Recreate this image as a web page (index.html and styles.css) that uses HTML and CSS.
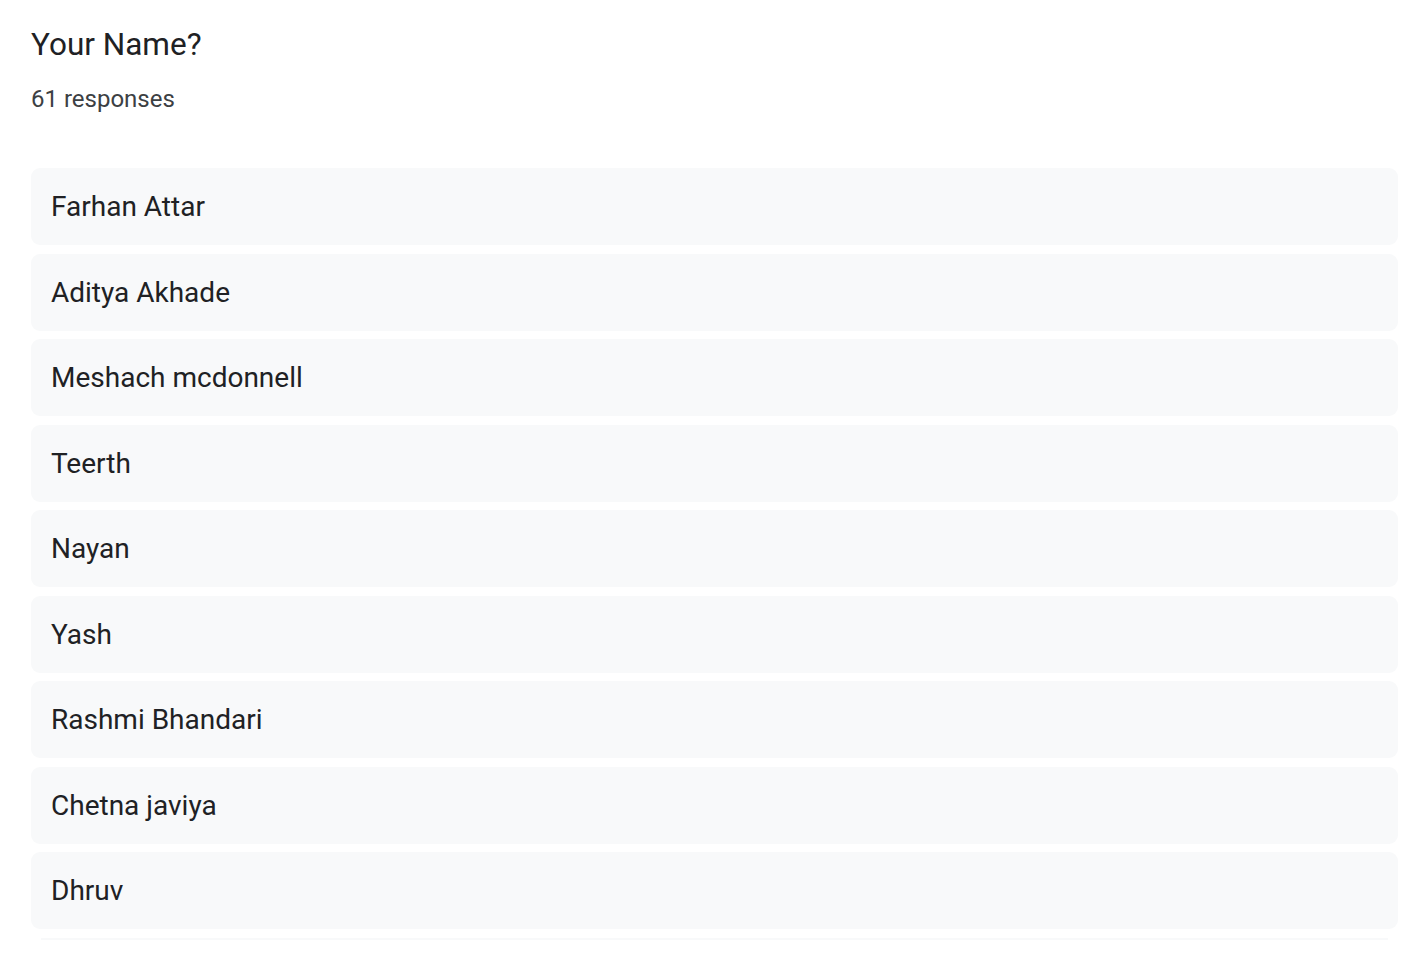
FILE: index.html
```html
<!DOCTYPE html>
<html lang="en">
<head>
  <meta charset="UTF-8">
  <title>Your Name? - Responses</title>
  <link rel="stylesheet" href="styles.css">
</head>
<body>
  <section class="question">
    <header class="question-header">
      <h2>Your Name?</h2>
      <p class="count">61 responses</p>
    </header>

    <div class="answers">
      <div class="answer">Farhan Attar</div>
      <div class="answer">Aditya Akhade</div>
      <div class="answer">Meshach mcdonnell</div>
      <div class="answer">Teerth</div>
      <div class="answer">Nayan</div>
      <div class="answer">Yash</div>
      <div class="answer">Rashmi Bhandari</div>
      <div class="answer">Chetna javiya</div>
      <div class="answer">Dhruv</div>
      <div class="answer answer-cut"></div>
    </div>
  </section>
</body>
</html>
```

FILE: styles.css
```css
* {
  box-sizing: border-box;
  margin: 0;
  padding: 0;
}

body {
  font-family: Roboto, "Liberation Sans", sans-serif;
  background: #fff;
  color: #202124;
  height: 980px;
  overflow: hidden;
}

.question {
  padding: 27px 6px 0 31px;
}

.question-header h2 {
  font-size: 31.5px;
  font-weight: 400;
  line-height: 36px;
}

.count {
  font-size: 24px;
  line-height: 28px;
  margin-top: 22px;
  color: #3c4043;
}

.answers {
  display: flex;
  flex-direction: column;
  gap: 8.5px;
  margin-top: 55px;
}

.answer {
  background: #f8f9fa;
  border-radius: 9px;
  height: 77px;
  padding: 0 20px;
  display: flex;
  align-items: center;
  font-size: 28px;
}

.answer-cut {
  height: 2px;
  border-radius: 0;
  margin: 0 10px;
}
```
